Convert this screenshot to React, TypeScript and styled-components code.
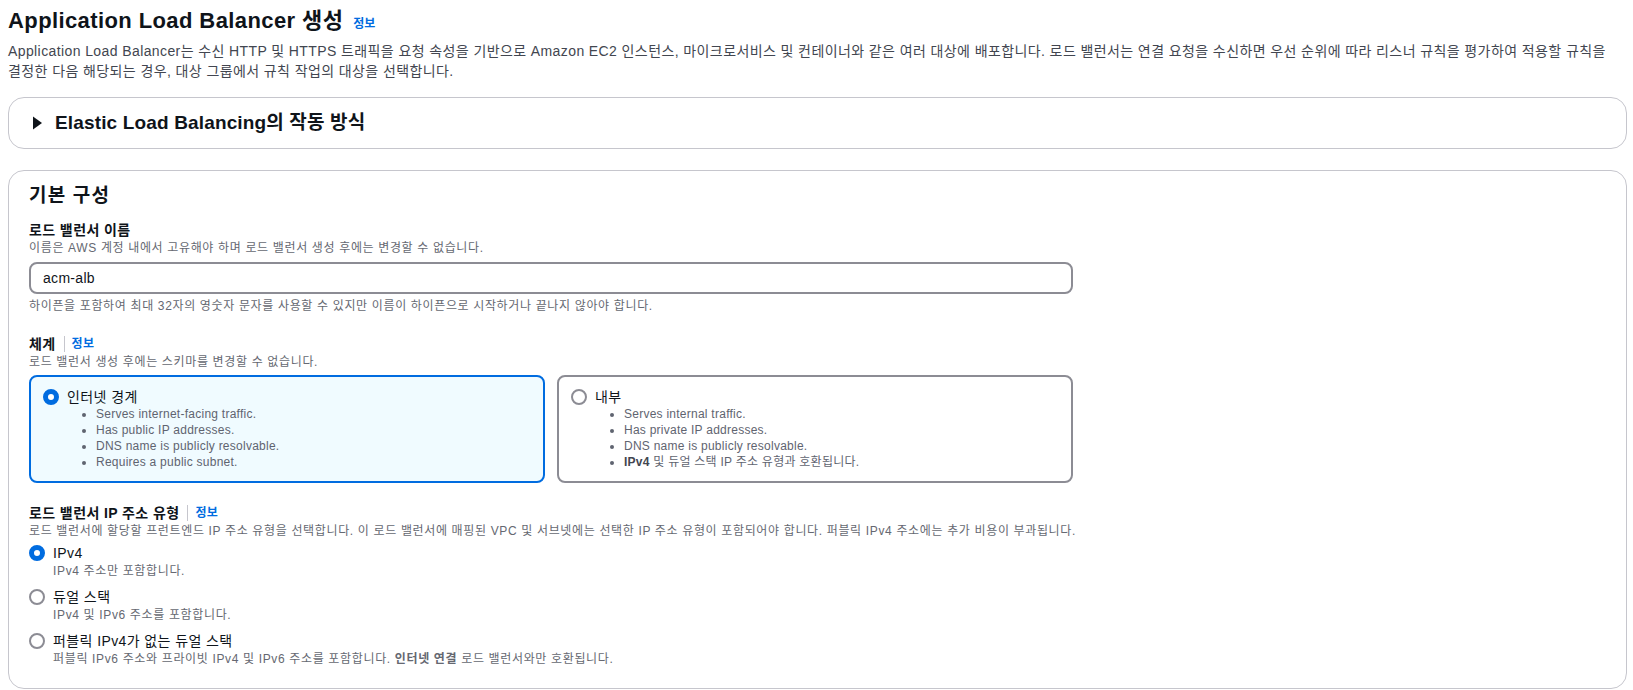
import React from "react";
import styled, { createGlobalStyle } from "styled-components";

const GlobalStyle = createGlobalStyle`
  body {
    margin: 0;
    background: #ffffff;
    color: #0f141a;
    font-family: "Liberation Sans", Arial, "Noto Sans CJK KR", sans-serif;
    word-break: keep-all;
  }
`;

const Page = styled.div`
  padding: 6px 6px 0 8px;
`;

const PageHeader = styled.div`
  display: flex;
  align-items: baseline;
  gap: 10px;
`;

const Title = styled.h1`
  margin: 0;
  font-size: 22px;
  line-height: 30px;
  font-weight: 700;
  letter-spacing: 0.4px;
`;

const InfoLink = styled.a`
  color: #006ce0;
  font-size: 12px;
  line-height: 16px;
  font-weight: 700;
  text-decoration: none;
`;

const PageDescription = styled.p`
  margin: 5px 0 0;
  font-size: 14px;
  line-height: 20px;
  letter-spacing: 0.4px;
  color: #424650;
`;

const Expandable = styled.div`
  margin-top: 16px;
  border: 1px solid #c6c6cd;
  border-radius: 16px;
  padding: 13px 20px;
  display: flex;
  align-items: center;
`;

const Caret = styled.svg`
  width: 16px;
  height: 16px;
  margin-right: 10px;
  flex-shrink: 0;
`;

const SectionHeading = styled.h2`
  margin: 0;
  font-size: 19px;
  line-height: 24px;
  font-weight: 700;
  letter-spacing: 0.15px;
`;

const Container = styled.section`
  margin-top: 21px;
  border: 1px solid #c6c6cd;
  border-radius: 16px;
  padding: 13px 20px 21px;
`;

const ContainerHeader = styled(SectionHeading)`
  margin-bottom: 12px;
  letter-spacing: 1.2px;
`;

const Fields = styled.div`
  display: flex;
  flex-direction: column;
  gap: 20px;
`;

const Field = styled.div<{ $wide?: boolean }>`
  display: flex;
  flex-direction: column;
  max-width: ${(p) => (p.$wide ? "none" : "1044px")};
`;

const LabelRow = styled.div`
  display: flex;
  align-items: center;
  font-size: 14px;
  line-height: 20px;
  font-weight: 700;
  letter-spacing: 0.4px;
`;

const LabelInfo = styled(InfoLink)`
  margin-left: 8px;
  padding-left: 7px;
  border-left: 1px solid #c6c6cd;
  letter-spacing: 0.3px;
`;

const Hint = styled.div<{ $gap?: number }>`
  margin-top: ${(p) => p.$gap ?? 0}px;
  font-size: 12px;
  line-height: 16px;
  letter-spacing: 0.65px;
  color: #656871;
`;

const Input = styled.input`
  margin-top: 6px;
  box-sizing: border-box;
  width: 100%;
  height: 32px;
  padding: 0 12px;
  border: 2px solid #8c8c94;
  border-radius: 8px;
  font-family: inherit;
  font-size: 14px;
  letter-spacing: 0.3px;
  color: #0f141a;
  outline: none;
`;

const TileGrid = styled.div`
  margin-top: 5px;
  display: grid;
  grid-template-columns: 1fr 1fr;
  gap: 12px;
`;

const Tile = styled.div<{ $selected?: boolean }>`
  box-sizing: border-box;
  height: 108px;
  padding: 11px 12px;
  border: 2px solid ${(p) => (p.$selected ? "#006ce0" : "#8c8c94")};
  border-radius: 8px;
  background: ${(p) => (p.$selected ? "#f0fbff" : "#ffffff")};
`;

const OptionRow = styled.div<{ $line: number }>`
  display: flex;
  align-items: flex-start;
  gap: 8px;
  font-size: 14px;
  line-height: ${(p) => p.$line}px;
  letter-spacing: 0.4px;
`;

const Radio = styled.span<{ $checked?: boolean; $line: number }>`
  box-sizing: border-box;
  flex-shrink: 0;
  width: 16px;
  height: 16px;
  margin-top: ${(p) => (p.$line - 16) / 2}px;
  border-radius: 50%;
  background: #ffffff;
  border: ${(p) => (p.$checked ? "5px solid #006ce0" : "2px solid #8c8c94")};
`;

const OptionBody = styled.div`
  display: flex;
  flex-direction: column;
`;

const BulletList = styled.ul`
  margin: 0;
  padding-left: 29px;
  font-size: 12px;
  line-height: 16px;
  letter-spacing: 0.25px;
  color: #5f6470;

  b {
    color: #424650;
  }
`;

const OptionList = styled.div`
  margin-top: 4px;
  display: flex;
  flex-direction: column;
  gap: 8px;
`;

type RadioOptionProps = {
  label: string;
  checked?: boolean;
  children: React.ReactNode;
};

function RadioOption({ label, checked, children }: RadioOptionProps) {
  return (
    <OptionRow $line={20}>
      <Radio $checked={checked} $line={20} />
      <OptionBody>
        <span>{label}</span>
        <Hint>{children}</Hint>
      </OptionBody>
    </OptionRow>
  );
}

type SchemeTileProps = {
  label: string;
  selected?: boolean;
  items: React.ReactNode[];
};

function SchemeTile({ label, selected, items }: SchemeTileProps) {
  return (
    <Tile $selected={selected}>
      <OptionRow $line={18}>
        <Radio $checked={selected} $line={18} />
        <OptionBody>
          <span>{label}</span>
          <BulletList>
            {items.map((item, i) => (
              <li key={i}>{item}</li>
            ))}
          </BulletList>
        </OptionBody>
      </OptionRow>
    </Tile>
  );
}

export default function App() {
  return (
    <>
      <GlobalStyle />
      <Page>
        <PageHeader>
          <Title>Application Load Balancer 생성</Title>
          <InfoLink href="#">정보</InfoLink>
        </PageHeader>
        <PageDescription>
          Application Load Balancer는 수신 HTTP 및 HTTPS 트래픽을 요청 속성을 기반으로 Amazon EC2 인스턴스,
          마이크로서비스 및 컨테이너와 같은 여러 대상에 배포합니다. 로드 밸런서는 연결 요청을 수신하면 우선 순위에
          따라 리스너 규칙을 평가하여 적용할 규칙을 결정한 다음 해당되는 경우, 대상 그룹에서 규칙 작업의 대상을
          선택합니다.
        </PageDescription>

        <Expandable>
          <Caret viewBox="0 0 16 16">
            <polygon points="4,1.5 13,8 4,14.5" fill="#0f141a" />
          </Caret>
          <SectionHeading>Elastic Load Balancing의 작동 방식</SectionHeading>
        </Expandable>

        <Container>
          <ContainerHeader>기본 구성</ContainerHeader>
          <Fields>
            <Field>
              <LabelRow>로드 밸런서 이름</LabelRow>
              <Hint>이름은 AWS 계정 내에서 고유해야 하며 로드 밸런서 생성 후에는 변경할 수 없습니다.</Hint>
              <Input readOnly value="acm-alb" />
              <Hint $gap={4}>
                하이픈을 포함하여 최대 32자의 영숫자 문자를 사용할 수 있지만 이름이 하이픈으로 시작하거나 끝나지
                않아야 합니다.
              </Hint>
            </Field>

            <Field>
              <LabelRow>
                체계
                <LabelInfo href="#">정보</LabelInfo>
              </LabelRow>
              <Hint>로드 밸런서 생성 후에는 스키마를 변경할 수 없습니다.</Hint>
              <TileGrid>
                <SchemeTile
                  label="인터넷 경계"
                  selected
                  items={[
                    "Serves internet-facing traffic.",
                    "Has public IP addresses.",
                    "DNS name is publicly resolvable.",
                    "Requires a public subnet.",
                  ]}
                />
                <SchemeTile
                  label="내부"
                  items={[
                    "Serves internal traffic.",
                    "Has private IP addresses.",
                    "DNS name is publicly resolvable.",
                    <>
                      <b>IPv4</b> 및 듀얼 스택 IP 주소 유형과 호환됩니다.
                    </>,
                  ]}
                />
              </TileGrid>
            </Field>

            <Field $wide>
              <LabelRow>
                로드 밸런서 IP 주소 유형
                <LabelInfo href="#">정보</LabelInfo>
              </LabelRow>
              <Hint>
                로드 밸런서에 할당할 프런트엔드 IP 주소 유형을 선택합니다. 이 로드 밸런서에 매핑된 VPC 및 서브넷에는
                선택한 IP 주소 유형이 포함되어야 합니다. 퍼블릭 IPv4 주소에는 추가 비용이 부과됩니다.
              </Hint>
              <OptionList>
                <RadioOption label="IPv4" checked>
                  IPv4 주소만 포함합니다.
                </RadioOption>
                <RadioOption label="듀얼 스택">IPv4 및 IPv6 주소를 포함합니다.</RadioOption>
                <RadioOption label="퍼블릭 IPv4가 없는 듀얼 스택">
                  퍼블릭 IPv6 주소와 프라이빗 IPv4 및 IPv6 주소를 포함합니다. <b>인터넷 연결</b> 로드 밸런서와만
                  호환됩니다.
                </RadioOption>
              </OptionList>
            </Field>
          </Fields>
        </Container>
      </Page>
    </>
  );
}
